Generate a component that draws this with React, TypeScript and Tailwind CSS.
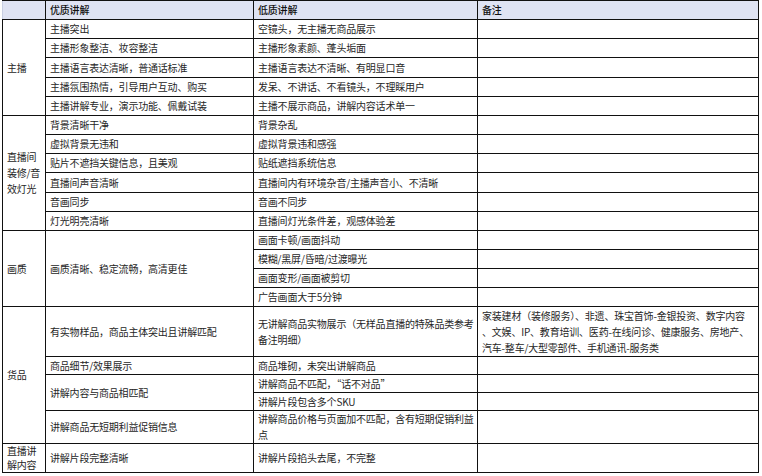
import type { ReactNode } from "react";

type Row = {
    group?: { label: ReactNode; span: number };
    good?: { text: ReactNode; span: number };
    bad: ReactNode;
    note?: ReactNode;
    h: string;
};

const rows: Row[] = [
    { group: { label: "主播", span: 5 }, good: { text: "主播突出", span: 1 }, bad: "空镜头，无主播无商品展示", h: "h-[19px]" },
    { good: { text: "主播形象整洁、妆容整洁", span: 1 }, bad: "主播形象素颜、蓬头垢面", h: "h-[19px]" },
    { good: { text: "主播语言表达清晰，普通话标准", span: 1 }, bad: "主播语言表达不清晰、有明显口音", h: "h-[20px]" },
    { good: { text: "主播氛围热情，引导用户互动、购买", span: 1 }, bad: "发呆、不讲话、不看镜头，不理睬用户", h: "h-[19px]" },
    { good: { text: "主播讲解专业，演示功能、佩戴试装", span: 1 }, bad: "主播不展示商品，讲解内容话术单一", h: "h-[19px]" },
    {
        group: { label: <>直播间<br />装修/音<br />效灯光</>, span: 6 },
        good: { text: "背景清晰干净", span: 1 },
        bad: "背景杂乱",
        h: "h-[19px]",
    },
    { good: { text: "虚拟背景无违和", span: 1 }, bad: "虚拟背景违和感强", h: "h-[19px]" },
    { good: { text: "贴片不遮挡关键信息，且美观", span: 1 }, bad: "贴纸遮挡系统信息", h: "h-[19px]" },
    { good: { text: "直播间声音清晰", span: 1 }, bad: "直播间内有环境杂音/主播声音小、不清晰", h: "h-[20px]" },
    { good: { text: "音画同步", span: 1 }, bad: "音画不同步", h: "h-[19px]" },
    { good: { text: "灯光明亮清晰", span: 1 }, bad: "直播间灯光条件差，观感体验差", h: "h-[19px]" },
    {
        group: { label: "画质", span: 4 },
        good: { text: "画质清晰、稳定流畅，高清更佳", span: 4 },
        bad: "画面卡顿/画面抖动",
        h: "h-[19px]",
    },
    { bad: "模糊/黑屏/昏暗/过渡曝光", h: "h-[19px]" },
    { bad: "画面变形/画面被剪切", h: "h-[19px]" },
    { bad: "广告画面大于5分钟", h: "h-[19px]" },
    {
        group: { label: "货品", span: 5 },
        good: { text: "有实物样品，商品主体突出且讲解匹配", span: 1 },
        bad: <>无讲解商品实物展示（无样品直播的特殊品类参考<br />备注明细）</>,
        note: (
            <>
                家装建材（装修服务）、非遗、珠宝首饰-金银投资、数字内容
                <br />
                、文娱、IP、教育培训、医药-在线问诊、健康服务、房地产、
                <br />
                汽车-整车/大型零部件、手机通讯-服务类
            </>
        ),
        h: "h-[50px]",
    },
    { good: { text: "商品细节/效果展示", span: 1 }, bad: "商品堆砌，未突出讲解商品", h: "h-[18px]" },
    { good: { text: "讲解内容与商品相匹配", span: 2 }, bad: "讲解商品不匹配，“话不对品”", h: "h-[18px]" },
    { bad: "讲解片段包含多个SKU", h: "h-[18px]" },
    {
        good: { text: "讲解商品无短期利益促销信息", span: 1 },
        bad: <>讲解商品价格与页面加不匹配，含有短期促销利益<br />点</>,
        h: "h-[33px]",
    },
    {
        group: { label: <span className="block leading-[14px]">直播讲<br />解内容</span>, span: 1 },
        good: { text: "讲解片段完整清晰", span: 1 },
        bad: "讲解片段掐头去尾，不完整",
        h: "h-[29px]",
    },
];

const cell = "border border-[#111] px-[4px] py-0 align-middle text-left whitespace-nowrap overflow-hidden";

export default function App() {
    return (
        <div className="w-[762px] h-[476px] bg-white overflow-hidden pl-[2px]">
            <table
                className="table-fixed border-collapse w-[756px] text-[10px] leading-[16px] tracking-[-0.2px] text-[#262626]"
                style={{ fontFamily: '"Noto Sans CJK SC", "Noto Sans", sans-serif' }}
            >
                <colgroup>
                    <col className="w-[43px]" />
                    <col className="w-[208px]" />
                    <col className="w-[224px]" />
                    <col className="w-[281px]" />
                </colgroup>
                <thead>
                    <tr className="h-[19px] bg-[#dfe3f3]">
                        <th className={`${cell} border-l-[#c9cfe3] font-medium`}></th>
                        <th className={`${cell} font-medium text-[#111]`}>优质讲解</th>
                        <th className={`${cell} font-medium text-[#111]`}>低质讲解</th>
                        <th className={`${cell} font-medium text-[#111]`}>备注</th>
                    </tr>
                </thead>
                <tbody>
                    {rows.map((r, i) => (
                        <tr key={i} className={r.h}>
                            {r.group && (
                                <td rowSpan={r.group.span} className={cell}>
                                    {r.group.label}
                                </td>
                            )}
                            {r.good && (
                                <td rowSpan={r.good.span} className={cell}>
                                    {r.good.text}
                                </td>
                            )}
                            <td className={cell}>{r.bad}</td>
                            <td className={cell}>{r.note}</td>
                        </tr>
                    ))}
                </tbody>
            </table>
        </div>
    );
}
